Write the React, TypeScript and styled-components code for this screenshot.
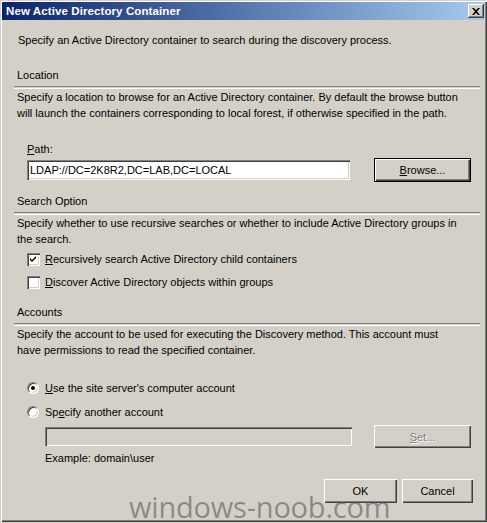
import React from 'react';
import styled, { createGlobalStyle } from 'styled-components';

const GlobalStyle = createGlobalStyle`
  html, body {
    margin: 0;
    padding: 0;
    background: #d4d0c8;
  }
  body {
    font-family: 'Liberation Sans', Arial, sans-serif;
    font-size: 11px;
    color: #000;
  }
`;

const Window = styled.div`
  position: relative;
  width: 487px;
  height: 522px;
  box-sizing: border-box;
  padding: 2px 2px 0;
  background: #d4d0c8;
  box-shadow: inset 1px 1px #d4d0c8, inset 2px 2px #ffffff,
    inset -1px -1px #404040, inset -2px -2px #808080;
  overflow: hidden;
`;

const TitleBar = styled.div`
  height: 18px;
  display: flex;
  align-items: center;
  justify-content: space-between;
  padding: 0 1px 0 4px;
  background: linear-gradient(to right, #0a246a, #a6caf0);
`;

const TitleText = styled.span`
  color: #fff;
  font-weight: bold;
  font-size: 11.5px;
  letter-spacing: 0.1px;
`;

const CloseButton = styled.div`
  width: 16px;
  height: 14px;
  display: flex;
  align-items: center;
  justify-content: center;
  background: #d4d0c8;
  box-shadow: inset -1px -1px #404040, inset 1px 1px #ffffff,
    inset -2px -2px #808080;
`;

const Body = styled.div`
  padding: 12px 14px 0 15px;
  display: flex;
  flex-direction: column;
`;

const Text = styled.div<{ $top?: number; $indent?: number }>`
  line-height: 16px;
  margin-top: ${(p) => p.$top ?? 0}px;
  padding-left: ${(p) => p.$indent ?? 0}px;
  white-space: nowrap;
`;

const Heading = styled.div<{ $top: number }>`
  line-height: 16px;
  margin-top: ${(p) => p.$top}px;
`;

const Separator = styled.div`
  margin: 3px -9px 0 -3px;
  height: 1px;
  border-top: 1px solid #808080;
  border-bottom: 1px solid #ffffff;
`;

const FieldRow = styled.div<{ $top: number; $indent: number }>`
  display: flex;
  align-items: center;
  justify-content: space-between;
  margin-top: ${(p) => p.$top}px;
  padding-left: ${(p) => p.$indent}px;
`;

const TextBox = styled.div<{ $width: number; $disabled?: boolean }>`
  width: ${(p) => p.$width}px;
  height: ${(p) => (p.$disabled ? 19 : 20)}px;
  box-sizing: border-box;
  padding: 0 3px;
  display: flex;
  align-items: center;
  background: ${(p) => (p.$disabled ? '#d4d0c8' : '#ffffff')};
  box-shadow: inset 1px 1px #808080, inset 2px 2px #404040,
    inset -1px -1px #ffffff, inset -2px -2px #d4d0c8;
  white-space: nowrap;
`;

const Button = styled.div<{
  $width: number;
  $height?: number;
  $default?: boolean;
  $disabled?: boolean;
}>`
  width: ${(p) => p.$width}px;
  height: ${(p) => p.$height ?? 23}px;
  box-sizing: border-box;
  display: flex;
  align-items: center;
  justify-content: center;
  background: #d4d0c8;
  color: ${(p) => (p.$disabled ? '#808080' : '#000')};
  text-shadow: ${(p) => (p.$disabled ? '1px 1px #ffffff' : 'none')};
  border: ${(p) => (p.$default ? '1px solid #000' : 'none')};
  box-shadow: inset 1px 1px #ffffff, inset -1px -1px #404040,
    inset -2px -2px #808080;
`;

const Option = styled.div<{ $top: number }>`
  display: flex;
  align-items: center;
  gap: 5px;
  height: 16px;
  margin-top: ${(p) => p.$top}px;
  padding-left: 10px;
`;

const CheckBox = styled.div`
  width: 13px;
  height: 13px;
  box-sizing: border-box;
  background: #fff;
  box-shadow: inset 1px 1px #808080, inset 2px 2px #404040,
    inset -1px -1px #ffffff, inset -2px -2px #d4d0c8;
  display: flex;
  align-items: center;
  justify-content: center;
`;

const Radio = styled.div<{ $checked?: boolean }>`
  width: 12px;
  height: 12px;
  box-sizing: border-box;
  border-radius: 50%;
  background: #fff;
  border: 1px solid;
  border-color: #808080 #ffffff #ffffff #808080;
  box-shadow: inset 1px 1px #404040, inset -1px -1px #d4d0c8;
  display: flex;
  align-items: center;
  justify-content: center;
  margin-right: 1px;

  &::after {
    content: '';
    width: 4px;
    height: 4px;
    border-radius: 50%;
    background: ${(p) => (p.$checked ? '#000' : 'transparent')};
  }
`;

const Footer = styled.div`
  display: flex;
  justify-content: flex-end;
  gap: 5px;
  margin: 13px -2px 0 0;
`;

const Watermark = styled.div`
  position: absolute;
  left: 129px;
  top: 490px;
  font-family: 'Open Sans', 'DejaVu Sans', sans-serif;
  font-size: 29px;
  line-height: 34px;
  color: rgba(90, 90, 90, 0.6);
  letter-spacing: -0.2px;
  pointer-events: none;
`;

const Key = ({ children }: { children: string }) => <u>{children}</u>;

const CheckMark = () => (
  <svg width="9" height="9" viewBox="0 0 9 9">
    <path d="M1 3 L3 5 L7 1 L7 3 L3 7 L1 5 Z" fill="#000" />
  </svg>
);

const CloseGlyph = () => (
  <svg width="8" height="7" viewBox="0 0 8 7">
    <path d="M0 0 H2 L4 2.2 L6 0 H8 L5 3.5 L8 7 H6 L4 4.8 L2 7 H0 L3 3.5 Z" fill="#000" />
  </svg>
);

export default function App() {
  return (
    <>
      <GlobalStyle />
      <Window>
        <TitleBar>
          <TitleText>New Active Directory Container</TitleText>
          <CloseButton>
            <CloseGlyph />
          </CloseButton>
        </TitleBar>
        <Body>
          <Text $indent={1}>
            Specify an Active Directory container to search during the discovery process.
          </Text>

          <Heading $top={19}>Location</Heading>
          <Separator />
          <Text>Specify a location to browse for an Active Directory container. By default the browse button</Text>
          <Text>will launch the containers corresponding to local forest, if otherwise specified in the path.</Text>

          <Text $top={20} $indent={10}>
            <Key>P</Key>ath:
          </Text>
          <FieldRow $top={1} $indent={10}>
            <TextBox $width={323}>LDAP://DC=2K8R2,DC=LAB,DC=LOCAL</TextBox>
            <Button $width={97} $height={24} $default>
              <span>
                <Key>B</Key>rowse...
              </span>
            </Button>
          </FieldRow>

          <Heading $top={11}>Search Option</Heading>
          <Separator />
          <Text>Specify whether to use recursive searches or whether to include Active Directory groups in</Text>
          <Text>the search.</Text>
          <Option $top={4}>
            <CheckBox>
              <CheckMark />
            </CheckBox>
            <span>
              <Key>R</Key>ecursively search Active Directory child containers
            </span>
          </Option>
          <Option $top={7}>
            <CheckBox />
            <span>
              <Key>D</Key>iscover Active Directory objects within groups
            </span>
          </Option>

          <Heading $top={14}>Accounts</Heading>
          <Separator />
          <Text>Specify the account to be used for executing the Discovery method. This account must</Text>
          <Text>have permissions to read the specified container.</Text>
          <Option $top={22}>
            <Radio $checked />
            <span>
              <Key>U</Key>se the site server's computer account
            </span>
          </Option>
          <Option $top={8}>
            <Radio />
            <span>
              Sp<Key>e</Key>cify another account
            </span>
          </Option>
          <FieldRow $top={5} $indent={28}>
            <TextBox $width={307} $disabled />
            <Button $width={97} $disabled>
              <span>
                <Key>S</Key>et...
              </span>
            </Button>
          </FieldRow>
          <Text $top={2} $indent={28}>
            Example: domain\user
          </Text>

          <Footer>
            <Button $width={73} $height={24}>
              OK
            </Button>
            <Button $width={71} $height={24}>
              Cancel
            </Button>
          </Footer>
        </Body>
        <Watermark>windows-noob.com</Watermark>
      </Window>
    </>
  );
}
